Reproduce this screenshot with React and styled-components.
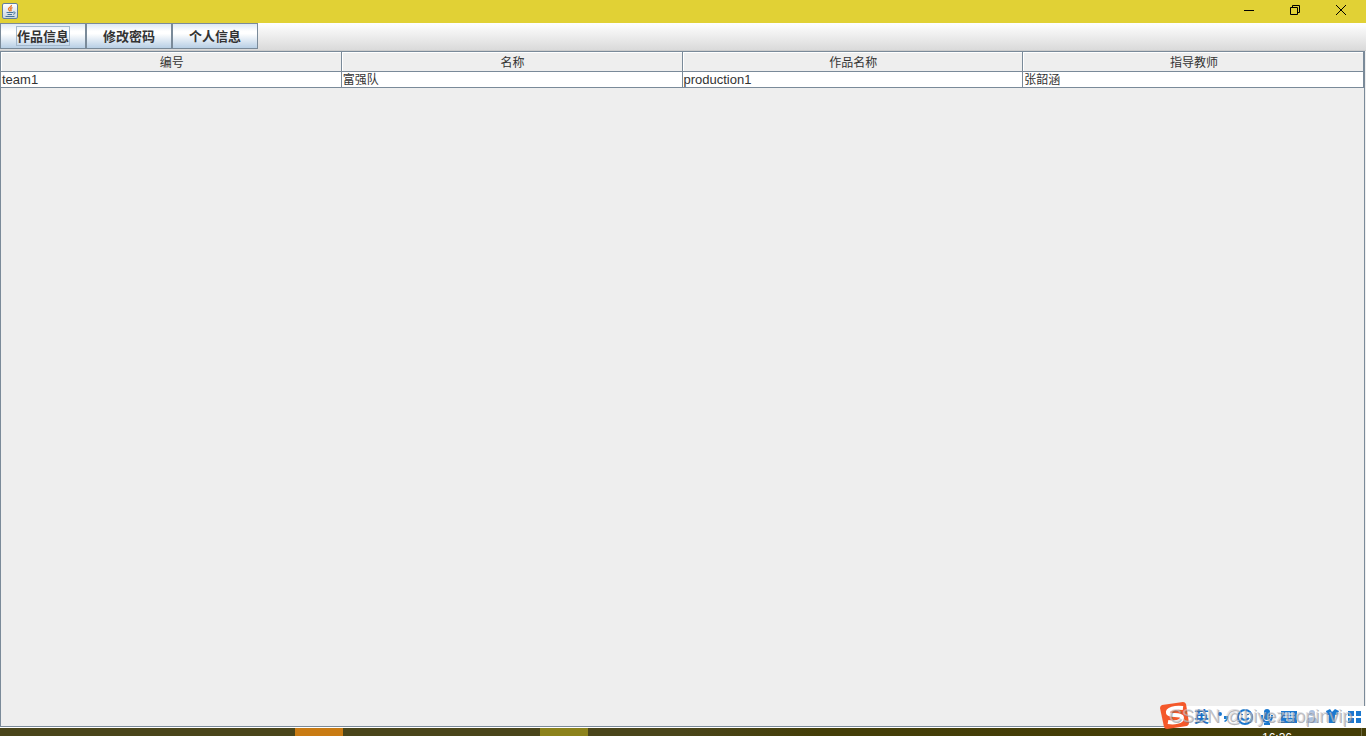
import React from "react";
import styled, { createGlobalStyle } from "styled-components";

const Global = createGlobalStyle`
  * { box-sizing: border-box; }
  html, body, #root { height: 100%; }
  body {
    margin: 0;
    overflow: hidden;
    background: #eeeeee;
    color: #333333;
    font-family: "Liberation Sans", "Noto Sans CJK SC", sans-serif;
    font-size: 12px;
  }
`;

const Window = styled.div`
  display: flex;
  flex-direction: column;
  height: 100vh;
`;

const TitleBar = styled.header`
  display: flex;
  justify-content: space-between;
  height: 23px;
  flex: none;
  padding: 0 2px;
  background: #e1d135;
`;

const AppIcon = styled.svg`
  width: 16px;
  height: 16px;
  margin-top: 3px;
`;

const WindowControls = styled.div`
  display: flex;
`;

const ControlButton = styled.button`
  display: flex;
  align-items: center;
  justify-content: center;
  width: 46px;
  height: 20px;
  padding: 0;
  border: 0;
  background: none;

  svg {
    width: 12px;
    height: 12px;
    fill: none;
    stroke: #000000;
  }
`;

const Toolbar = styled.nav`
  display: flex;
  flex: none;
  height: 28px;
  border-bottom: 1px solid #cccccc;
  background: linear-gradient(#ffffff, #dadada);
`;

const ToolButton = styled.button`
  width: 86px;
  height: 26px;
  padding: 0;
  border: 1px solid #7a8a99;
  background: linear-gradient(#dde8f3, #ffffff 30%, #ffffff 40%, #b8cfe5);
  color: #333333;
  font: bold 13px/16px "Liberation Sans", "Noto Sans CJK SC", sans-serif;
`;

const ButtonLabel = styled.span`
  display: inline-block;
  padding-top: 2px;
  border: 1px solid ${(p) => (p.$focused ? "#a3b8cc" : "transparent")};
`;

const ScrollPane = styled.main`
  flex: 1;
  min-height: 0;
  margin-right: 1px;
  border: 1px solid #7a8a99;
  background: #eeeeee;
`;

const Table = styled.table`
  width: 100%;
  table-layout: fixed;
  border-collapse: separate;
  border-spacing: 0;
`;

const HeadCell = styled.th`
  height: 20px;
  padding: 4px 0 0 2px;
  border-right: 1px solid #7a8a99;
  border-bottom: 1px solid #7a8a99;
  box-shadow: inset 1px 1px #ffffff;
  font-weight: normal;
  line-height: 15px;
`;

const Cell = styled.td`
  height: 16px;
  padding: 1px 1px 0;
  border-right: 1px solid #7a8a99;
  border-bottom: 1px solid #7a8a99;
  background: #ffffff;
  font-size: ${(p) => (p.$code ? 13 : 12)}px;
  line-height: 14px;
  white-space: nowrap;
`;

const Taskbar = styled.footer`
  display: flex;
  flex: none;
  height: 9px;
  overflow: hidden;
  border-top: 1px solid #ffffff;
  background: linear-gradient(90deg, #4a451a 50%, #443e08 60%, #443d07);
`;

const TaskSpace = styled.div`
  width: ${(p) => p.$width}px;
`;

const TaskItem = styled.div`
  width: 48px;
  background: ${(p) => p.$color};
`;

const Clock = styled.time`
  margin-left: auto;
  padding: 3px 69px 0 0;
  border-right: 1px solid #716c43;
  margin-right: 4px;
  color: #ffffff;
  line-height: 14px;
`;

const InputBar = styled.aside`
  position: absolute;
  right: 0;
  bottom: 7px;
  width: 206px;
  height: 28px;

  svg {
    display: block;
    width: 206px;
    height: 28px;
  }
`;

const Watermark = styled.span`
  position: absolute;
  right: 14px;
  top: 4px;
  color: rgba(205, 205, 210, 0.6);
  font-size: 18px;
  line-height: 22px;
  text-shadow: 1px 1px rgba(110, 110, 115, 0.5);
  white-space: nowrap;
`;

const ImeMode = styled.b`
  position: absolute;
  left: 34px;
  top: 6px;
  color: #1b70c5;
  font-size: 15px;
  line-height: 20px;
`;

const tabs = ["作品信息", "修改密码", "个人信息"];
const columns = ["编号", "名称", "作品名称", "指导教师"];
const rows = [["team1", "富强队", "production1", "张韶涵"]];

function JavaIcon() {
  return (
    <AppIcon viewBox="0 0 16 16" aria-hidden="true">
      <defs>
        <linearGradient id="tile" x1="0" y1="0" x2="0" y2="1">
          <stop offset="0" stopColor="#ffffff" />
          <stop offset="1" stopColor="#c9d4df" />
        </linearGradient>
      </defs>
      <rect x="0.5" y="0.5" width="15" height="15" rx="1.5" fill="url(#tile)" stroke="#637f99" />
      <path d="M9.4 2C10.2 4 6.2 4.4 6.5 6.1C6.7 7 7.5 7.4 7.7 8.4M10.5 4.6C8.7 5.2 8.2 5.8 9 6.7C9.4 7.3 9 7.8 8.6 8.3" fill="none" stroke="#e9792b" strokeWidth="1.4" />
      <path d="M4.5 9.5H11M5.5 11.5H10M3.5 13.5H12.5M11 9.2C14 8.4 13.8 10.8 11.2 11.3" fill="none" stroke="#45749b" strokeWidth="1" />
    </AppIcon>
  );
}

function InputMethod() {
  return (
    <InputBar aria-label="输入法">
      <svg viewBox="0 0 206 28" aria-hidden="true">
        <path d="M10 5H206V27H10Z" fill="#ffffff" />
        <path d="M2 4L23 1Q25 1 26 3L29 22Q29 24 27 25L7 28Q5 28 4 26L0 7Q0 5 2 4Z" fill="#f4582a" />
        <path d="M23 7C15 6 7 8 8 12C9 16 22 12 22 17C22 21 14 22 8 21" fill="none" stroke="#ffffff" strokeWidth="4" />
        <g fill="#1b78cf">
          <circle cx="60" cy="13" r="2" />
          <path d="M64 15H68Q69 19 65 21L64 20Q66 19 66 18H64Z" />
          <rect x="104" y="8" width="6" height="11" rx="3" />
          <path d="M121 10H137V22H121Z" />
          <path d="M166 10L170 8L172 11L175 8L179 10L177 14H175V22H169V14H167Z" />
          <path d="M188 10H194V15H188ZM196 10H201V15H196ZM188 17H194V22H188ZM196 17H201V22H196Z" />
        </g>
        <g fill="none" stroke="#1b78cf" strokeWidth="2">
          <circle cx="85" cy="16" r="7" />
          <path d="M81 17Q85 21 89 17M82 13V14M88 13V14M102 14Q102 21 107 21Q112 21 112 14M107 21V24M104 23H110" />
        </g>
        <path d="M123 13H135M123 16H135M126 19H132M126 11V17M129 11V17M132 11V17" stroke="#ffffff" />
        <path d="M146 22Q146 16 152 16Q158 16 158 22Z" fill="#a9c0e0" />
        <circle cx="152" cy="12" r="3" fill="#a9c0e0" />
      </svg>
      <ImeMode>英</ImeMode>
      <Watermark>CSDN @biyezuopinvip</Watermark>
    </InputBar>
  );
}

export default function App() {
  return (
    <>
      <Global />
      <Window>
        <TitleBar>
          <JavaIcon />
          <WindowControls>
            <ControlButton aria-label="最小化">
              <svg viewBox="0 0 12 12"><path d="M1 6.5H11" /></svg>
            </ControlButton>
            <ControlButton aria-label="还原">
              <svg viewBox="0 0 12 12"><path d="M1.5 3.5H8.5V10.5H1.5ZM3.5 3V1.5H10.5V8.5H9" /></svg>
            </ControlButton>
            <ControlButton aria-label="关闭">
              <svg viewBox="0 0 12 12"><path d="M1 1L11 11M11 1L1 11" /></svg>
            </ControlButton>
          </WindowControls>
        </TitleBar>
        <Toolbar>
          {tabs.map((label, i) => (
            <ToolButton key={label}>
              <ButtonLabel $focused={i === 0}>{label}</ButtonLabel>
            </ToolButton>
          ))}
        </Toolbar>
        <ScrollPane>
          <Table>
            <thead>
              <tr>{columns.map((c) => <HeadCell key={c}>{c}</HeadCell>)}</tr>
            </thead>
            <tbody>
              {rows.map((row) => (
                <tr key={row[0]}>
                  {row.map((v, i) => <Cell key={v} $code={i % 2 === 0}>{v}</Cell>)}
                </tr>
              ))}
            </tbody>
          </Table>
        </ScrollPane>
        <Taskbar>
          <TaskSpace $width={295} />
          <TaskItem $color="#c97b13" />
          <TaskSpace $width={197} />
          <TaskItem $color="#8c821b" />
          <Clock>16:36</Clock>
        </Taskbar>
      </Window>
      <InputMethod />
    </>
  );
}
